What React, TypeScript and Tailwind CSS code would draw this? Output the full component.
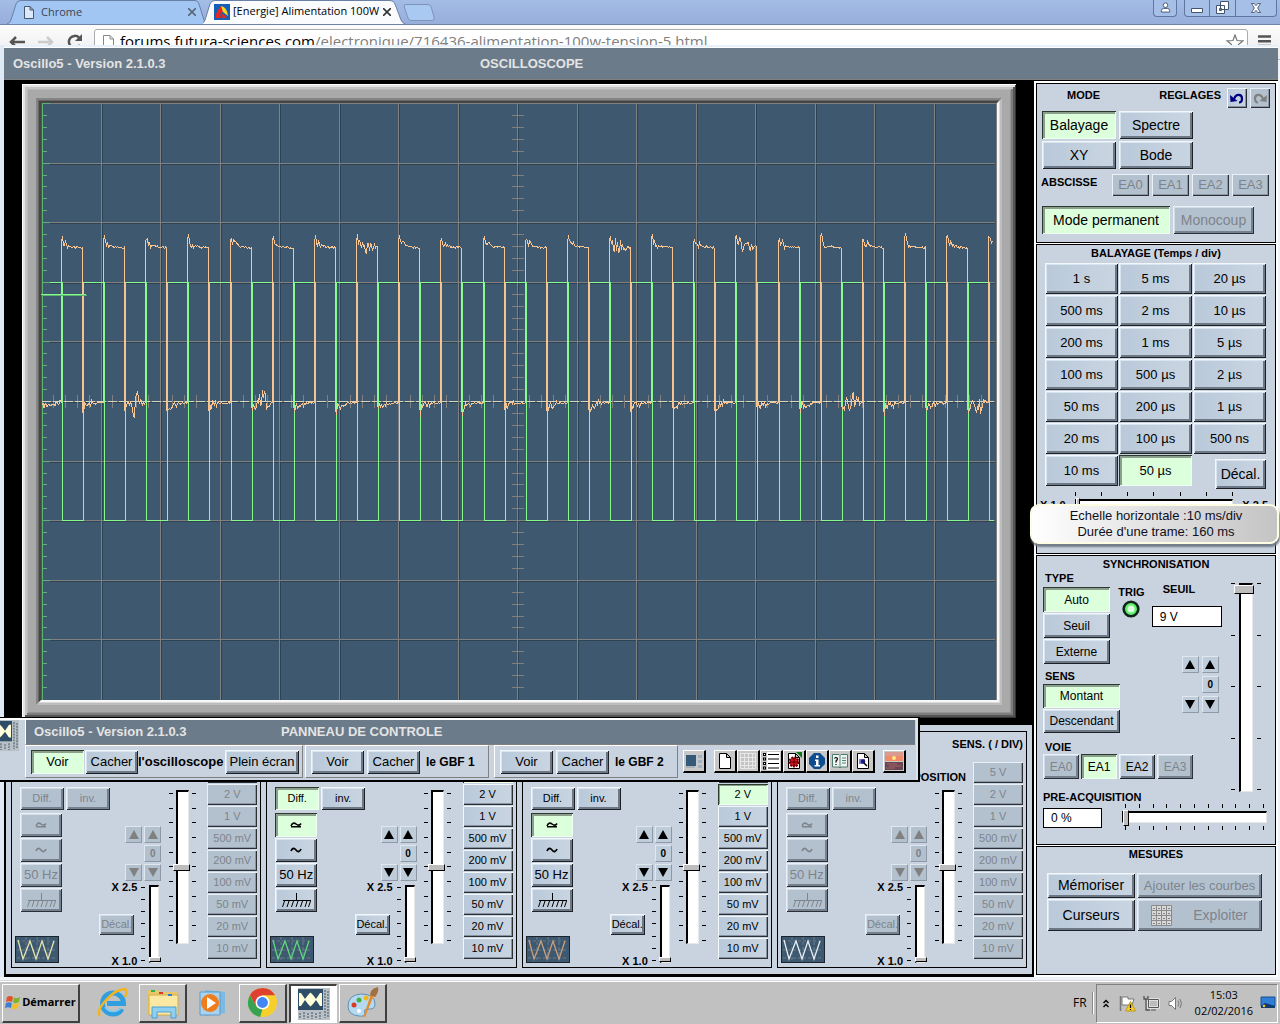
import React from "react";

type BtnProps = {
  children?: React.ReactNode;
  on?: boolean;
  disabled?: boolean;
  className?: string;
  label?: string;
};

function Btn({ children, on, disabled, className = "", label }: BtnProps) {
  const look = on
    ? "bg-[#dcffdc] text-black shadow-[inset_1px_1px_0_#2c3a2e,inset_-1px_-1px_0_#eefff0,inset_3px_3px_0_#8aa08c]"
    : disabled
      ? "bg-[#b3c1cf] text-[#7e848b] shadow-[inset_1px_1px_0_#e9f0f7,inset_-1px_-1px_0_#2b3036,inset_2px_2px_0_#d3dde8,inset_-3px_-3px_0_#75818e]"
      : "bg-linear-to-r from-[#b9c9da] to-[#cad5e1] text-black shadow-[inset_1px_1px_0_#f2f7fc,inset_-1px_-1px_0_#1d2126,inset_2px_2px_0_#dae4ee,inset_-3px_-3px_0_#6c7886]";
  return (
    <button
      type="button"
      disabled={disabled}
      aria-pressed={on}
      aria-label={label}
      className={`flex items-center justify-center whitespace-nowrap ${look} ${className}`}
    >
      {children}
    </button>
  );
}

function SmallBtn({ children, disabled, on, className = "", label }: BtnProps) {
  const look = on
    ? "bg-[#dcffdc] text-black shadow-[inset_1px_1px_0_#2c3a2e,inset_-1px_-1px_0_#eefff0,inset_2px_2px_0_#8aa08c]"
    : disabled
      ? "bg-[#b3c1cf] text-[#7e848b] shadow-[inset_1px_1px_0_#e9f0f7,inset_-1px_-1px_0_#2b3036,inset_-2px_-2px_0_#8c98a5]"
      : "bg-linear-to-r from-[#b9c9da] to-[#cad5e1] text-black shadow-[inset_1px_1px_0_#f2f7fc,inset_-1px_-1px_0_#2b3036,inset_-2px_-2px_0_#8793a0]";
  return (
    <button
      type="button"
      disabled={disabled}
      aria-pressed={on}
      aria-label={label}
      className={`flex items-center justify-center whitespace-nowrap ${look} ${className}`}
    >
      {children}
    </button>
  );
}

function ArrowPad({ disabled, wide }: { disabled?: boolean; wide?: boolean }) {
  const cell = `flex size-[17px] items-center justify-center border border-t-[#dfe8f0] border-l-[#dfe8f0] border-r-[#8d99a6] border-b-[#8d99a6] ${
    disabled ? "bg-[#b3c1cf] text-[#808080]" : "bg-[#bfcddb] text-black"
  }`;
  const up = (
    <svg viewBox="0 0 10 9" className="h-[9px] w-[10px]" fill="currentColor">
      <path d="M5 0 10 9H0z" />
    </svg>
  );
  const down = (
    <svg viewBox="0 0 10 9" className="h-[9px] w-[10px]" fill="currentColor">
      <path d="M0 0H10L5 9z" />
    </svg>
  );
  return (
    <div className={`grid grid-cols-[17px_17px] ${wide ? "gap-[3px]" : "gap-[2px]"}`}>
      <button type="button" disabled={disabled} aria-label="Monter vite" className={cell}>{up}</button>
      <button type="button" disabled={disabled} aria-label="Monter" className={cell}>{up}</button>
      <span />
      <button type="button" disabled={disabled} className={`${cell} text-[10px] leading-none font-bold`}>0</button>
      <button type="button" disabled={disabled} aria-label="Descendre vite" className={cell}>{down}</button>
      <button type="button" disabled={disabled} aria-label="Descendre" className={cell}>{down}</button>
    </div>
  );
}

function Ticks({ n, horizontal }: { n: number; horizontal?: boolean }) {
  return (
    <div className={`flex justify-between ${horizontal ? "" : "flex-col"}`}>
      {Array.from({ length: n }, (_, i) => (
        <span key={i} className={horizontal ? "h-1 w-px bg-black" : "h-px w-1 bg-black"} />
      ))}
    </div>
  );
}

const vertical =
  "m-0 block appearance-none border border-t-2 border-l-2 border-t-black border-l-black border-r-[#e8e8e8] border-b-[#e8e8e8] bg-white [writing-mode:vertical-lr] [direction:rtl] [&::-webkit-slider-thumb]:appearance-none [&::-webkit-slider-thumb]:border [&::-webkit-slider-thumb]:border-t-white [&::-webkit-slider-thumb]:border-l-white [&::-webkit-slider-thumb]:border-r-black [&::-webkit-slider-thumb]:border-b-black [&::-webkit-slider-thumb]:bg-[#bdbdbd]";
const horizontalRange =
  "m-0 block w-full appearance-none border border-t-2 border-t-black border-l-black border-r-[#e8e8e8] border-b-[#e8e8e8] bg-white [&::-webkit-slider-thumb]:appearance-none [&::-webkit-slider-thumb]:border [&::-webkit-slider-thumb]:border-t-white [&::-webkit-slider-thumb]:border-l-white [&::-webkit-slider-thumb]:border-r-black [&::-webkit-slider-thumb]:border-b-black [&::-webkit-slider-thumb]:bg-[#bdbdbd]";

/* ---------- Oscilloscope screen ---------- */

const X0 = 42;
const Y0 = 104;
const DIV = 59.6;
const PERIOD = 42.15;
const EDGE = 61;

function buildTraces() {
  let seed = 7;
  const rnd = () => {
    seed = (seed * 16807) % 2147483647;
    return seed / 2147483647 - 0.5;
  };
  const lowBurst = [2, 5, 19, 22];
  const highBurst = [7, 13, 16];
  let orange = "M42 405";
  for (let x = 43; x < EDGE; x += 1) orange += `L${x} ${(406 - (x - 43) / 5 + rnd() * 6).toFixed(1)}`;
  let green = "M50 282.5";
  for (let k = 0; k < 23; k += 1) {
    const a = Math.round(EDGE + k * PERIOD);
    const b = a + 21;
    const c = Math.round(EDGE + (k + 1) * PERIOD);
    if (a < 994) orange += `L${a + 0.5} 402`;
    for (let x = a; x <= b && x < 994; x += 1) {
      const t = x - a;
      const base = 248 - 8 * Math.exp(-t / 6);
      const noise = rnd() * (t < 7 ? 7 : 2);
      const burst = highBurst.includes(k) && t > 3 ? rnd() * 18 * Math.exp(-Math.abs(t - 9) / 8) : 0;
      const spike = t === 1 ? -5 : 0;
      const y = (base + noise + burst + spike).toFixed(1);
      orange += t === 0 ? `V${y}` : `L${x + 0.5} ${y}`;
    }
    for (let x = b; x < c && x < 994; x += 1) {
      const t = x - b;
      const base = 402.5 + 5 * Math.exp(-t / 7);
      const noise = rnd() * (t < 11 ? 8 : 2);
      const burst = lowBurst.includes(k + 1) && t > 4 ? rnd() * 34 * Math.exp(-Math.abs(t - 11) / 5) : 0;
      const y = (base + noise + burst + (t === 1 ? 6 : 0)).toFixed(1);
      orange += t === 0 ? `V${y}` : `L${x + 0.5} ${y}`;
    }
    if (a + 1 < 994) green += `H${a + 1.5}V520.5H${Math.min(b + 1.5, 994)}`;
    if (b + 1 < 994) green += `V282.5`;
  }
  return { orange, green };
}

const traces = buildTraces();

function ScopeScreen() {
  const vs = Array.from({ length: 15 }, (_, i) => Math.round(X0 + (i + 1) * 59.5));
  const hs = Array.from({ length: 9 }, (_, i) => Math.round(Y0 + (i + 1) * DIV) - 1);
  const xTicks = Array.from({ length: 79 }, (_, i) => Math.round(X0 + (i + 1) * 11.9));
  const yTicks = Array.from({ length: 49 }, (_, i) => Math.round(Y0 + (i + 1) * 11.92) - 1);
  return (
    <svg viewBox="41 103 956 597" className="block h-auto w-full bg-[#3d586f]" shapeRendering="crispEdges" fill="none" role="img" aria-label="Ecran">
      <g stroke="#2d4252">
        {vs.map((x) => <path key={x} d={`M${x + 0.5} 104V700`} />)}
        {hs.map((y) => <path key={y} d={`M50 ${y + 1.5}H995`} />)}
      </g>
      <g stroke="#808080">
        {vs.map((x) => <path key={x} d={`M${x - 0.5} 104V700`} />)}
        {hs.map((y) => <path key={y} d={`M50 ${y + 0.5}H995`} />)}
        {xTicks.map((x) => <path key={x} d={`M${x - 0.5} 395V408`} />)}
        {yTicks.map((y) => <path key={y} d={`M512 ${y + 0.5}H524`} />)}
        <path d="M50 103.5H996.5V700" />
      </g>
      <g stroke="#5cb270">
        <path d="M42.5 104V700M42 103.5H50" />
        {yTicks.map((y, i) => <path key={y} d={`M42 ${y + 0.5}H${(i + 1) % 5 === 0 ? 50 : 47}`} />)}
      </g>
      <path d="M42 401.5H994" stroke="#d5d5c0" strokeDasharray="9 2" />
      <path d={traces.green} stroke="#86fb8b" />
      <path d={traces.orange} stroke="#f8c592" />
      <path d="M41 294.5H86" stroke="#86fb8b" />
      <path d="M42 295.5H87" stroke="#5cb270" />
    </svg>
  );
}

/* ---------- Channels ---------- */

type ChannelProps = {
  id: number;
  disabled?: boolean;
  diff?: boolean;
  coupled?: boolean;
  sens?: number;
  color: string;
  headings?: boolean;
};

const levels = ["5 V", "2 V", "1 V", "500 mV", "200 mV", "100 mV", "50 mV", "20 mV", "10 mV"];

function Channel({ id, disabled, diff, coupled, sens, color, headings }: ChannelProps) {
  return (
    <section aria-label={`Voie ${id}`} className="flex min-w-[250px] flex-1 border border-black pr-[3px]">
      <div className="flex flex-1 flex-col pt-[55px] pl-[3px]">
        <div className="ml-[5px] flex gap-[2px] text-[11px]">
          <Btn on={diff} disabled={disabled} className="h-[23px] w-11">Diff.</Btn>
          <Btn disabled={disabled} className="h-[23px] w-11">inv.</Btn>
        </div>
        <div className="mt-[3px] flex justify-between">
          <div className="flex flex-col">
            <div className="ml-[5px] flex w-[42px] flex-col gap-px">
              <Btn on={coupled} disabled={disabled} className="h-6" label="Alternatif et continu">
                <svg viewBox="0 0 12 6" className="h-[6px] w-3" fill="none" stroke="currentColor" strokeWidth="1.6">
                  <path d="M1 4Q3 -.500 6 2T11 1.500M1 4.800H11" />
                </svg>
              </Btn>
              <Btn disabled={disabled} className="h-6" label="Alternatif">
                <svg viewBox="0 0 12 6" className="h-[6px] w-3" fill="none" stroke="currentColor" strokeWidth="1.8">
                  <path d="M1 4Q3 -.500 6 3T11 2" />
                </svg>
              </Btn>
              <Btn disabled={disabled} className="h-6 text-[13px]">50 Hz</Btn>
              <Btn disabled={disabled} className="h-6" label="Masse">
                <svg viewBox="0 0 30 14" className="h-[14px] w-[30px]" fill="none" stroke="currentColor">
                  <path d="M15.500 0V7M2 7.500H30M3.500 8l-2 6M8 8l-2 6M12.500 8l-2 6M17 8l-2 6M21.500 8l-2 6M26 8l-2 6M29.500 8l-2 6" />
                </svg>
              </Btn>
            </div>
            <svg viewBox="0 0 44 27" className="mt-[24px] h-[27px] w-11" fill="none">
              <path d="M0 0H44V27H0z" fill="#3d586f" stroke="#1a2530" strokeWidth="2" />
              <path d="M2 5H42M2 14H42M2 22H42M11 1V26M22 1V26M33 1V26" stroke="#6d7f8c" strokeDasharray="3 2" />
              <path d="M3 4 8 23 15 5 21 23 27 5 33 23 39 5" stroke={color} strokeWidth="1.3" />
            </svg>
          </div>
          <div className="mr-[3px] flex flex-col items-end pt-[13px]">
            <ArrowPad disabled={disabled} />
            <div className="mr-[2px] flex">
              <div className="mr-[4px] flex flex-col items-end justify-between text-[11px] leading-3 font-bold">
                <span>X 2.5</span>
                <Btn disabled={disabled} className="mr-[3px] h-[21px] w-[35px] text-[11px] font-normal">Décal.</Btn>
                <span>X 1.0</span>
              </div>
              <div className="flex py-[4px]">
                <div className="mr-1 flex pt-[2px] pb-[2px]"><Ticks n={7} /></div>
                <input
                  type="range"
                  aria-label={`Zoom voie ${id}`}
                  disabled={disabled}
                  defaultValue={0}
                  className={`${vertical} h-[78px] w-[10px] [&::-webkit-slider-thumb]:h-[5px] [&::-webkit-slider-thumb]:w-3`}
                />
              </div>
            </div>
          </div>
        </div>
      </div>
      <div className="flex w-9 flex-col items-end pt-[38px]">
        <h3 className="h-[20px] text-[11px] leading-[14px] font-bold whitespace-nowrap">{headings ? "POSITION" : ""}</h3>
        <div className="flex w-full justify-center gap-[3px]">
          <div className="flex py-[3px]"><Ticks n={11} /></div>
          <input
            type="range"
            aria-label={`Position voie ${id}`}
            disabled={disabled}
            defaultValue={50}
            className={`${vertical} h-[154px] w-[13px] [&::-webkit-slider-thumb]:-ml-[3px] [&::-webkit-slider-thumb]:h-[7px] [&::-webkit-slider-thumb]:w-[17px]`}
          />
          <div className="flex py-[3px]"><Ticks n={11} /></div>
        </div>
      </div>
      <div className="ml-[7px] flex w-[50px] flex-col items-end pt-[5px]">
        <h3 className="mb-[11px] h-[14px] text-[11px] leading-[14px] font-bold whitespace-nowrap">{headings ? "SENS. ( / DIV)" : ""}</h3>
        <div className="flex w-full flex-col gap-px text-[11px]">
          {levels.map((v, i) => (
            <SmallBtn key={v} on={sens === i} disabled={disabled} label={v} className="h-[21px]">
              {i > 0 || headings ? v : ""}
            </SmallBtn>
          ))}
        </div>
      </div>
    </section>
  );
}

/* ---------- Right-hand panels ---------- */

const box = "border border-black bg-[#c9d3e0]";
const cap = "text-[11px] leading-[14px] font-bold whitespace-nowrap";

function ModePanel() {
  return (
    <section className={`${box} h-[160px] px-[5px]`}>
      <div className="flex h-[27px] items-center">
        <h2 className={`${cap} flex-1 pb-[6px] pl-[25px]`}>MODE</h2>
        <span className={`${cap} mr-[6px] pb-[6px]`}>REGLAGES</span>
        <SmallBtn label="Annuler" className="mr-[3px] size-5">
          <svg viewBox="0 0 14 12" className="h-3 w-[14px]" fill="none" stroke="#000080" strokeWidth="2.2">
            <path d="M4 7C6 1 12 2 12 6.500 12 9 11 10.500 9 10.500" />
            <path d="M0 3 .500 10 7.500 9z" fill="#000080" stroke="none" />
          </svg>
        </SmallBtn>
        <SmallBtn label="Rétablir" disabled className="size-5">
          <svg viewBox="0 0 14 12" className="h-3 w-[14px]" fill="none" stroke="#808080" strokeWidth="2.2">
            <path d="M10 7C8 1 2 2 2 6.500 2 9 3 10.500 5 10.500" />
            <path d="M14 3 13.500 10 6.500 9z" fill="#808080" stroke="none" />
          </svg>
        </SmallBtn>
      </div>
      <div className="grid grid-cols-[74px_74px] gap-x-[3px] gap-y-[2px] text-[14px]">
        <Btn on className="h-7">Balayage</Btn>
        <Btn className="h-7">Spectre</Btn>
        <Btn className="h-7">XY</Btn>
        <Btn className="h-7">Bode</Btn>
      </div>
      <div className="mt-[5px] -ml-px flex gap-[3px]">
        <h3 className={`${cap} w-[68px] pt-px`}>ABSCISSE</h3>
        {["EA0", "EA1", "EA2", "EA3"].map((v) => (
          <SmallBtn key={v} disabled className="h-[22px] w-[37px] text-[13px]">{v}</SmallBtn>
        ))}
      </div>
      <div className="mt-[10px] flex gap-[3px] text-[14px]">
        <Btn on className="h-7 w-32">Mode permanent</Btn>
        <Btn disabled className="h-7 w-[81px]">Monocoup</Btn>
      </div>
    </section>
  );
}

const sweeps = [
  "1 s", "5 ms", "20 µs", "500 ms", "2 ms", "10 µs", "200 ms", "1 ms", "5 µs", "100 ms", "500 µs", "2 µs",
  "50 ms", "200 µs", "1 µs", "20 ms", "100 µs", "500 ns", "10 ms", "50 µs",
];

function SweepPanel() {
  return (
    <section className={`${box} relative h-[310px]`}>
      <h2 className={`${cap} pt-px text-center`}>BALAYAGE (Temps / div)</h2>
      <div className="mr-[9px] ml-2 mt-[3px] grid grid-cols-3 gap-px text-[13px]">
        {sweeps.map((v) => <Btn key={v} on={v === "50 µs"} className="h-[31px]">{v}</Btn>)}
        <Btn className="mt-1 ml-auto h-[30px] w-[51px] text-[14px]">Décal.</Btn>
      </div>
      <div className="mx-[3px] mt-[3px] flex items-end justify-between">
        <span className={cap}>X 1.0</span>
        <div className="mx-[9px] mb-[5px] flex-1">
          <Ticks n={7} horizontal />
          <input type="range" aria-label="Zoom horizontal" defaultValue={0} className={`${horizontalRange} mt-[3px] h-2 [&::-webkit-slider-thumb]:h-3 [&::-webkit-slider-thumb]:w-1`} />
        </div>
        <span className={`${cap} mr-1`}>X 2.5</span>
      </div>
      <div
        role="tooltip"
        className="absolute top-[259px] -right-1 -left-[7px] rounded-[9px] border-2 border-[#fdfde4] bg-linear-to-r from-white to-[#c4c4c4] py-[2px] pl-[3px] text-center text-[13px] leading-4 text-[#10101c] shadow-[1px_3px_2px_#737c88]"
      >
        <p>Echelle horizontale :10 ms/div</p>
        <p>Durée d'une trame: 160 ms</p>
      </div>
    </section>
  );
}

function SyncPanel() {
  return (
    <section className={`${box} flex h-[290px] flex-col px-[6px]`}>
      <h2 className={`${cap} pt-px text-center`}>SYNCHRONISATION</h2>
      <div className="flex justify-between">
        <div className="flex w-[77px] flex-col text-[12px]">
          <h3 className={`${cap} pl-[2px]`}>TYPE</h3>
          <div className="mt-[2px] flex w-[67px] flex-col gap-px">
            <Btn on className="h-[25px]">Auto</Btn>
            <Btn className="h-[25px]">Seuil</Btn>
            <Btn className="h-[25px]">Externe</Btn>
          </div>
          <h3 className={`${cap} mt-[5px] pl-[2px]`}>SENS</h3>
          <div className="mt-[1px] flex flex-col gap-px">
            <Btn on className="h-[24px]">Montant</Btn>
            <Btn className="h-[24px]">Descendant</Btn>
          </div>
          <h3 className={`${cap} mt-[7px] pl-[2px]`}>VOIE</h3>
          <div className="flex gap-[2px]">
            <Btn disabled className="h-[25px] w-9 shrink-0">EA0</Btn>
            <Btn on className="h-[25px] w-9 shrink-0">EA1</Btn>
            <Btn className="h-[25px] w-9 shrink-0">EA2</Btn>
            <Btn disabled className="h-[25px] w-9 shrink-0">EA3</Btn>
          </div>
        </div>
        <div className="-ml-[9px] flex flex-col items-center pt-[14px]">
          <h3 className={cap}>TRIG</h3>
          <svg viewBox="0 0 18 18" className="mt-px size-[18px]">
            <circle cx="9" cy="9" r="7.300" fill="#63f06c" stroke="#10251c" strokeWidth="2.6" />
            <circle cx="9" cy="9" r="3.500" fill="#dcffe0" />
          </svg>
        </div>
        <div className="mr-[2px] flex w-[70px] flex-col pt-[11px]">
          <label htmlFor="seuil" className={`${cap} pl-[11px]`}>SEUIL</label>
          <input id="seuil" defaultValue="9 V" className="mt-[10px] h-[21px] w-full border border-black bg-white pl-[7px] text-[12px]" />
          <div className="mt-[29px] self-end pr-[3px]"><ArrowPad wide /></div>
        </div>
        <div className="mr-[8px] flex gap-[4px] pt-[12px]">
          <div className="flex pb-[2px]"><Ticks n={5} /></div>
          <input
            type="range"
            aria-label="Niveau du seuil"
            defaultValue={100}
            className={`${vertical} h-[209px] w-[14px] [&::-webkit-slider-thumb]:-ml-[4px] [&::-webkit-slider-thumb]:h-[9px] [&::-webkit-slider-thumb]:w-5`}
          />
          <div className="flex pb-[2px]"><Ticks n={5} /></div>
        </div>
      </div>
      <div className="-mt-[8px] flex">
        <div className="w-[59px]">
          <label htmlFor="preacq" className={cap}>PRE-ACQUISITION</label>
          <input id="preacq" defaultValue="0 %" className="block h-[20px] w-full border border-black bg-white pl-[7px] text-[12px]" />
        </div>
        <div className="mr-[2px] ml-[20px] flex-1 pt-[20px]">
          <div className="px-[3px]"><Ticks n={11} horizontal /></div>
          <input type="range" aria-label="Pré-acquisition" defaultValue={0} className={`${horizontalRange} my-[3px] h-3 [&::-webkit-slider-thumb]:h-4 [&::-webkit-slider-thumb]:w-[6px]`} />
          <div className="px-[3px]"><Ticks n={11} horizontal /></div>
        </div>
      </div>
    </section>
  );
}

function MeasurePanel() {
  return (
    <section className={`${box} h-[129px] px-[10px]`}>
      <h2 className={`${cap} text-center`}>MESURES</h2>
      <div className="mt-[12px] grid grid-cols-[88px_125px] gap-x-[2px] gap-y-[1px] text-[14px]">
        <Btn className="h-[25px]">Mémoriser</Btn>
        <Btn disabled className="h-[25px] text-[13px]">Ajouter les courbes</Btn>
        <Btn className="h-8">Curseurs</Btn>
        <Btn disabled className="h-8 gap-[21px]">
          <svg viewBox="0 0 21 21" className="size-[21px]" stroke="#8a8a8a" fill="#d8d8d8">
            <path d="M.500 .500H20.500V20.500H.500zM5.500 0V21M10.500 0V21M15.500 0V21M0 5.500H21M0 10.500H21M0 15.500H21" />
            <path d="M2.500 3.500h16M2.500 8.500h16M2.500 13.500h16M2.500 18.500h16" stroke="#333" strokeDasharray="1 4" />
          </svg>
          Exploiter
        </Btn>
      </div>
    </section>
  );
}

/* ---------- Control window ---------- */

function ScopeLogo({ className }: { className: string }) {
  return (
    <svg viewBox="0 0 32 32" className={className} preserveAspectRatio="none">
      <path d="M0 0H32V32H0z" fill="#b9c1c8" />
      <path d="M0 1H25V22H0z" fill="#2f4d66" />
      <path d="M1 5H3L7 11 10 7 12.500 4.500 15 7 18 11 22 5H24V18H22L18 12 15 16 12.500 18.500 10 16 7 12 3 18H1z" fill="#ffffdc" />
      <path d="M27 2V30M30 3V30M2 25V31M6 24V31M10 25V31M14 24V31M18 25V31M22 24V31" stroke="#7c8790" strokeWidth="2" strokeDasharray="2 1" />
    </svg>
  );
}

const tool = "flex h-[23px] w-[23px] items-center justify-center border-t border-l border-t-white border-l-white border-r-2 border-b-2 border-r-black border-b-black bg-[#c8c8c8]";

function ToolIcons() {
  const sheet = <path d="M3.500 1.500H10.500L14.500 5.500V16.500H3.500zM10.500 1.500V5.500H14.500" fill="#fff" stroke="#000" />;
  return (
    <>
      <button type="button" aria-label="Oscilloscope" className={`${tool} ml-[5px]`}>
        <svg viewBox="0 0 18 18" className="size-[18px]">
          <path d="M1 3H11V14H1z" fill="#335a78" />
          <path d="M13 3H17V6H13zM13 8H17V11H13zM13 13H17V16H13z" fill="#9fb2c4" />
          <path d="M1 15H10" stroke="#8f9aa4" />
        </svg>
      </button>
      <div className="ml-[8px] flex">
        <button type="button" aria-label="Nouveau" className={tool}>
          <svg viewBox="0 0 18 18" className="size-[18px]">{sheet}</svg>
        </button>
        <button type="button" aria-label="Grille" className={tool}>
          <svg viewBox="0 0 18 18" className="size-[18px]" fill="#c4c4c4" stroke="#e8e8e8">
            <path d="M1.500 1.500H16.500V16.500H1.500zM5.500 1V17M9.500 1V17M13.500 1V17M1 5.500H17M1 9.500H17M1 13.500H17" />
          </svg>
        </button>
        <button type="button" aria-label="Liste" className={tool}>
          <svg viewBox="0 0 18 18" className="size-[18px]">
            <path d="M5 0H18V18H5z" fill="#fff" />
            <path d="M1 1H4V4H1zM1 5.500H4V8.500H1zM1 10H4V13H1zM1 14.500H4V17.500H1z" fill="#000" />
            <path d="M2 2H3V3H2zM2 6.500H3V7.500H2zM2 11H3V12H2zM2 15.500H3V16.500H2z" fill="#fff" />
            <path d="M6 2.500H17M6 7H17M6 11.500H17M6 16H17" stroke="#000" />
          </svg>
        </button>
        <button type="button" aria-label="Configuration" className={tool}>
          <svg viewBox="0 0 18 18" className="size-[18px]">
            {sheet}
            <path d="M11 0H17V6z" fill="#0a7a1a" />
            <circle cx="9" cy="10" r="4.500" fill="#e01020" stroke="#600" strokeDasharray="2 1" strokeWidth="2" />
            <path d="M5 10H13M9 6V14" stroke="#400" />
          </svg>
        </button>
        <button type="button" aria-label="Informations" className={tool}>
          <svg viewBox="0 0 18 18" className="size-[18px]">
            <path d="M6 1H12L17 6V12L12 17H6L1 12V6z" fill="#0f4d8f" />
            <path d="M8 3.500H10.500V6H8zM7 7.500H10.500V13H12V14.500H6.500V13H8V9H7z" fill="#fff" />
          </svg>
        </button>
        <button type="button" aria-label="Aide" className={tool}>
          <svg viewBox="0 0 18 18" className="size-[18px]" fill="none">
            <path d="M1.500 2.500H8L9 3.500 10 2.500H16.500V15H10L9 16 8 15H1.500z" fill="#eef4f0" stroke="#4d7a70" />
            <path d="M9 3.500V16M11 6H15M11 8.500H15M11 11H15" stroke="#5a8078" />
            <path d="M3.500 6.500Q5 4.500 6.500 6.500 6.500 8 5 9V10.500M5 12V13" stroke="#000" strokeWidth="1.2" />
          </svg>
        </button>
        <button type="button" aria-label="Aperçu" className={tool}>
          <svg viewBox="0 0 18 18" className="size-[18px]">
            {sheet}
            <path d="M5 7H11V12H5z" fill="#7b86c8" />
            <circle cx="9" cy="9.500" r="2.200" fill="#181880" />
            <path d="M10 11 13 14" stroke="#000" strokeWidth="1.500" />
          </svg>
        </button>
      </div>
      <button type="button" aria-label="Arrière-plan" className={`${tool} ml-[8px]`}>
        <svg viewBox="0 0 18 18" className="size-[18px]">
          <path d="M0 0H18V9H0z" fill="#f28a68" />
          <path d="M0 0H18V4H0z" fill="#d99a90" />
          <circle cx="9" cy="6" r="2" fill="#ffe87a" />
          <path d="M0 10H18V18H0z" fill="#6a4450" />
          <path d="M2 12H12M4 14H16M1 16H10" stroke="#a5666a" />
        </svg>
      </button>
    </>
  );
}

const group = "flex h-[33px] items-center border border-t-white border-l-white border-r-[#808080] border-b-[#808080]";

function ControlWindow() {
  return (
    <section aria-label="Panneau de controle" className="absolute top-[717px] right-[360px] left-0 border-t border-r-2 border-b-2 border-black bg-[#c9d3e0]">
      <div className="flex border-t-2 border-r-2 border-t-white border-r-[#dbe3ec]">
        <div className="w-[25px] overflow-hidden">
          <ScopeLogo className="-ml-[13px] h-[31px] w-8" />
        </div>
        <div className="flex-1">
          <header className="mr-px flex h-[25px] items-center border-b border-l border-b-[#808080] border-l-white bg-[#6c7b89] pl-[8px] text-[13px] font-bold text-[#e4e4e4]">
            <span className="w-[247px]">Oscillo5 - Version 2.1.0.3</span>
            <span>PANNEAU DE CONTROLE</span>
          </header>
          <div className="flex items-center pb-[2px] text-[13px]">
            <div className={`${group} w-[278px] pl-[5px]`}>
              <Btn on className="mr-[1px] h-[24px] w-[53px]">Voir</Btn>
              <Btn className="h-[24px] w-[53px]">Cacher</Btn>
              <span className="flex-1 font-bold">l'oscilloscope</span>
              <Btn className="mr-[3px] h-[24px] w-[74px]">Plein écran</Btn>
            </div>
            <div className={`${group} ml-[2px] w-[184px] gap-[3px] pl-[5px]`}>
              <Btn className="h-[24px] w-[53px]">Voir</Btn>
              <Btn className="h-[24px] w-[53px]">Cacher</Btn>
              <span className="pl-[3px] text-[12px] font-bold">le GBF 1</span>
            </div>
            <div className={`${group} ml-[5px] w-[184px] gap-[3px] pl-[5px]`}>
              <Btn className="h-[24px] w-[53px]">Voir</Btn>
              <Btn className="h-[24px] w-[53px]">Cacher</Btn>
              <span className="pl-[3px] text-[12px] font-bold">le GBF 2</span>
            </div>
            <ToolIcons />
          </div>
        </div>
      </div>
    </section>
  );
}

/* ---------- Browser behind ---------- */

function Browser() {
  return (
    <header className="absolute inset-x-0 top-0 bg-[#f3f4f6] font-['Open_Sans','Noto_Sans',sans-serif]">
      <div className="flex h-[25px] items-end border-b border-[#6f82a8] bg-linear-to-b from-[#a3bde6] to-[#98addb]">
        <div className="relative flex h-[24px] w-[196px] items-center pl-[24px] text-[12px] text-[#3b4452]">
          <svg viewBox="0 0 200 24" preserveAspectRatio="none" className="absolute inset-y-0 left-[7px] h-full w-[200px]">
            <path d="M0 24Q3 23 4 20L9 4Q10 .500 14 .500H188Q191 .500 192 4L197 20Q198 23 200 24" fill="#a2c6f3" stroke="#6a7fa5" />
          </svg>
          <svg viewBox="0 0 10 13" className="relative h-[13px] w-[10px]" fill="#dce9f8" stroke="#4a5668"><path d="M.500 .500H6L9.500 4V12.500H.500zM6 .500V4H9.500" /></svg>
          <span className="relative ml-[7px] flex-1 text-[11px]">Chrome</span>
          <button type="button" aria-label="Fermer Chrome" className="relative">
            <svg viewBox="0 0 8 8" className="size-2" stroke="#5b6676" strokeWidth="1.6"><path d="M0 0 8 8M8 0 0 8" /></svg>
          </button>
        </div>
        <div className="relative ml-[7px] flex h-[25px] w-[200px] items-center pr-[14px] pl-[11px] text-[11px] text-black">
          <svg viewBox="0 0 204 25" preserveAspectRatio="none" className="absolute inset-y-0 left-0 h-full w-[204px]">
            <path d="M-2 25.500Q1 24 2 21L7 5Q8 1.500 12 1.500H187Q191 1.500 192 5L198 21Q199 24 203 25.500" fill="#fafbfd" stroke="#6a7fa5" />
          </svg>
          <svg viewBox="0 0 16 16" className="relative size-4 shrink-0">
            <path d="M0 0H16V16H0z" fill="#1460b8" />
            <path d="M2 14Q1 9 7 2L9 8Q5 8 7 14z" fill="#e8261c" />
            <path d="M7 2Q13 3 14 12L9 8z" fill="#ffd21c" />
            <path d="M7 9 13 13 9 15z" fill="#e8261c" />
          </svg>
          <span className="relative ml-[3px] flex-1 whitespace-nowrap">[Energie] Alimentation 100W</span>
          <button type="button" aria-label="Fermer Energie" className="relative ml-1">
            <svg viewBox="0 0 8 8" className="size-2" stroke="#333" strokeWidth="1.6"><path d="M0 0 8 8M8 0 0 8" /></svg>
          </button>
        </div>
        <button type="button" aria-label="Nouvel onglet" className="mb-[3px]">
          <svg viewBox="0 0 32 17" className="h-[17px] w-8"><path d="M1 2Q1 .500 3 .500H25Q27 .500 28 2.500L31 13Q32 16.500 29 16.500H8Q6 16.500 5 14z" fill="#a9c9f3" stroke="#7d93ba" /></svg>
        </button>
        <div className="mr-[3px] ml-auto flex self-start">
          <button type="button" aria-label="Profil" className="mr-[7px] flex h-[17px] w-6 items-center justify-center rounded-b border border-t-0 border-[#60759f] bg-[#a6bfe6]">
            <svg viewBox="0 0 12 12" className="-mt-px size-[11px]" fill="#fff" stroke="#44546f"><circle cx="6" cy="3.500" r="2.500" /><path d="M1.500 11V9Q2 7 4 7H8Q10 7 10.500 9V11z" /></svg>
          </button>
          <button type="button" aria-label="Réduire" className="flex h-[17px] w-[26px] items-center justify-center rounded-bl border border-t-0 border-[#60759f] bg-[#a6bfe6]">
            <svg viewBox="0 0 12 5" className="mt-1 h-[5px] w-3" fill="#fff" stroke="#44546f"><path d="M.500 .500H11.500V4.500H.500z" /></svg>
          </button>
          <button type="button" aria-label="Restaurer" className="flex h-[17px] w-[25px] items-center justify-center border-b border-[#60759f] bg-[#a6bfe6]">
            <svg viewBox="0 0 13 13" className="-mt-px size-[13px]" fill="#fff" stroke="#44546f"><path d="M4.500 .500H12.500V8.500H4.500zM.500 4.500H8.500V12.500H.500zM3.500 7.500H5.500V9.500H3.500z" /></svg>
          </button>
          <button type="button" aria-label="Fermer" className="flex h-[17px] w-[42px] items-center justify-center rounded-br border border-t-0 border-[#60759f] bg-[#a6bfe6]">
            <svg viewBox="0 0 12 11" className="-mt-px h-[10px] w-3"><path d="M1 .500H4L6 3 8 .500H11L7.800 5.500 11 10.500H8L6 8 4 10.500H1L4.200 5.500z" fill="#fff" stroke="#44546f" /></svg>
          </button>
        </div>
      </div>
      <div className="flex h-[35px] items-start border-b border-[#b5b9c0] bg-linear-to-b from-[#fcfcfd] to-[#ececee] pt-1">
        <div className="flex w-[94px] gap-[13px] pt-[7px] pl-[9px]">
          <svg viewBox="0 0 16 12" className="h-3 w-4" fill="none" stroke="#555" strokeWidth="2.5"><path d="M2 6H16M7 1 2 6 7 11" /></svg>
          <svg viewBox="0 0 16 12" className="h-3 w-4" fill="none" stroke="#ccc" strokeWidth="2.5"><path d="M0 6H14M9 1 14 6 9 11" /></svg>
          <svg viewBox="0 0 16 16" className="-mt-[2px] size-4" fill="none" stroke="#555" strokeWidth="2.5"><path d="M13 11A6 6 0 1 1 12 3.500" /><path d="M15 0V7H8z" fill="#555" stroke="none" /></svg>
        </div>
        <div className="flex h-[26px] flex-1 items-start rounded-[3px] border border-[#a9abae] bg-white pl-[8px]">
          <svg viewBox="0 0 11 14" className="mt-[5px] h-[14px] w-[11px]" fill="none" stroke="#888"><path d="M.500 .500H7L10.500 4V13.500H.500zM7 .500V4H10.500" /></svg>
          <span className="ml-[6px] flex-1 text-[15px] leading-[22px] text-[#808080]">
            <span className="text-black">forums.futura-sciences.com</span>/electronique/716436-alimentation-100w-tension-5.html
          </span>
          <svg viewBox="0 0 18 17" className="mt-1 mr-[3px] h-[17px] w-[18px]" fill="none" stroke="#777" strokeWidth="1.2"><path d="M9 1 11 6.500 17 6.800 12.500 10.500 14 16 9 13 4 16 5.500 10.500 1 6.800 7 6.500z" /></svg>
        </div>
        <button type="button" aria-label="Menu" className="mr-[9px] ml-[10px] pt-[6px]">
          <svg viewBox="0 0 13 12" className="h-3 w-[13px]" stroke="#555" strokeWidth="2.6"><path d="M0 1.500H13M0 6.200H13M0 11H13" /></svg>
        </button>
      </div>
    </header>
  );
}

/* ---------- Taskbar ---------- */

const task = "flex h-[39px] items-center justify-center border-t border-l border-r-2 border-b-2 border-t-white border-l-white border-r-[#404040] border-b-[#404040]";

function Taskbar() {
  return (
    <footer className="flex h-[43px] items-center border-t border-white bg-[#c1c1c1] px-[2px] font-['Open_Sans','Noto_Sans',sans-serif] shadow-[0_-1px_0_#d9d9d9]">
      <button type="button" className={`${task} w-[78px] text-[11px] font-bold`}>
        <svg viewBox="0 0 16 15" className="mr-px h-[15px] w-4">
          <path d="M2 2Q5 0 8 2L7 7Q4 5.500 1 7z" fill="#e2512a" />
          <path d="M9 2.500Q12 4 15 2L14 7Q11 9 8 7.500z" fill="#7db52a" />
          <path d="M1 8Q4 6.500 6.800 8L6 13Q3 11.500 0 13z" fill="#3a7fd0" />
          <path d="M7.800 8.500Q11 10 14 8L13 13Q10 15 7 13.500z" fill="#f4c020" />
        </svg>
        Démarrer
      </button>
      <button type="button" aria-label="Internet Explorer" className="ml-[17px]">
        <svg viewBox="0 0 32 32" className="size-8" fill="none">
          <path d="M25 22A10.500 10.500 0 1 1 26.500 16.500H10" stroke="#2f9fe0" strokeWidth="5" />
          <path d="M24 21A10 10 0 0 1 8 20" stroke="#7ccdf5" strokeWidth="1.500" />
          <path d="M3 29Q-1 24 9 13T28 2Q31 4 28 10" stroke="#f2b51c" strokeWidth="2.4" />
        </svg>
      </button>
      <button type="button" aria-label="Explorateur" className={`${task} ml-[10px] w-[48px]`}>
        <svg viewBox="0 0 34 32" className="h-8 w-[34px]">
          <path d="M2 3H12L14 5H31V27H2z" fill="#e9c766" />
          <path d="M3 8H32V28H3z" fill="#fbe9a3" stroke="#d4ac48" />
          <path d="M5 3H9V5H5z" fill="#2bb24a" /><path d="M13 5H17V7H13z" fill="#d83b2b" /><path d="M22 7H26V9H22z" fill="#2d7de0" />
          <path d="M6 20H30V31H25V25H11V31H6z" fill="#8fd0f2" stroke="#4a9fd0" />
        </svg>
      </button>
      <button type="button" aria-label="Lecteur multimédia" className="ml-[11px]">
        <svg viewBox="0 0 30 30" className="size-[30px]">
          <path d="M7 2 27 4V25L7 28z" fill="#7fb8e0" />
          <path d="M2 4H22V27H2z" fill="#a8d2ef" stroke="#5a9cc8" />
          <circle cx="12" cy="15" r="9" fill="#f07c1c" />
          <path d="M9 9 18 15 9 21z" fill="#fff" />
        </svg>
      </button>
      <button type="button" aria-label="Chrome" className={`${task} ml-[11px] w-[48px]`}>
        <svg viewBox="0 0 32 32" className="size-[31px]">
          <circle cx="16" cy="16" r="15" fill="#f7cf2d" />
          <path d="M3 8.500A15 15 0 0 1 29 8.500H16L9.500 20z" fill="#df4030" />
          <path d="M3 8.500 9.500 20 16 23 13.500 31A15 15 0 0 1 3 8.500" fill="#35a352" />
          <circle cx="16" cy="16" r="7.200" fill="#fff" /><circle cx="16" cy="16" r="5.600" fill="#4285f4" />
        </svg>
      </button>
      <button type="button" aria-label="Oscillo5" className="ml-[2px] flex h-[39px] w-[48px] items-center justify-center border-t-2 border-l-2 border-r border-b border-t-[#404040] border-l-[#404040] border-r-white border-b-white bg-white">
        <ScopeLogo className="size-8" />
      </button>
      <button type="button" aria-label="Paint" className={`${task} ml-[2px] w-[48px]`}>
        <svg viewBox="0 0 34 32" className="h-8 w-[34px]">
          <path d="M2 19Q2 8 15 7 29 7 29 17 29 23 22 22 17 22 19 26 19 30 13 29 2 28 2 19z" fill="#b5daf0" stroke="#5e90b5" />
          <circle cx="8" cy="18" r="2.500" fill="#d83a2a" /><circle cx="13" cy="13" r="2.500" fill="#47b04a" /><circle cx="20" cy="11" r="2.500" fill="#f0b820" /><circle cx="13" cy="24" r="2" fill="#fff" />
          <path d="M28 8 19 30Q17 31 18 28L25 7z" fill="#e8892c" />
          <path d="M24 8Q24 2 32 0 33 5 29 10z" fill="#a07040" />
        </svg>
      </button>
      <span className="ml-auto text-[12px]">FR</span>
      <span className="mr-[2px] ml-[5px] h-[22px] w-[2px] border-l border-[#8a8a8a] bg-white" />
      <div className="flex h-[39px] items-center border border-t-[#808080] border-l-[#808080] border-r-white border-b-white pr-px pl-[6px]">
        <svg viewBox="0 0 6 9" className="h-[9px] w-[6px]" fill="none" stroke="#000" strokeWidth="1.4"><path d="M.500 4 3 1.500 5.500 4M.500 8 3 5.500 5.500 8" /></svg>
        <svg viewBox="0 0 17 17" className="ml-[10px] size-[17px]">
          <path d="M1.500 1V16" stroke="#777" strokeWidth="1.500" /><path d="M3 2H9V4H15L13 10H3z" fill="#fff" stroke="#777" />
          <path d="M11.500 6.500 16.500 16H6.500z" fill="#f8d02a" stroke="#c09a10" /><path d="M11.500 9.500V13M11.500 14V15" stroke="#000" strokeWidth="1.3" />
        </svg>
        <svg viewBox="0 0 17 16" className="ml-[7px] h-4 w-[17px]" fill="none" stroke="#555">
          <path d="M5.500 4.500H15.500V12.500H5.500z" fill="#bbb" stroke="#fff" strokeWidth="2" /><path d="M5.500 4.500H15.500V12.500H5.500zM8 15H13" />
          <path d="M1 1V4H5V1M3 4V15H7" strokeWidth="1.3" />
        </svg>
        <svg viewBox="0 0 15 15" className="ml-[8px] size-[15px]" fill="#fff" stroke="#777"><path d="M1 5.500H3.500L7.500 1.500V13.500L3.500 9.500H1z" /><path d="M10 4.500Q12 7.500 10 10.500M12 3Q15 7.500 12 12" fill="none" /></svg>
        <div className="ml-[12px] text-center text-[11px] leading-4">
          <p>15:03</p>
          <p>02/02/2016</p>
        </div>
        <svg viewBox="0 0 16 14" className="ml-[7px] h-[14px] w-4"><path d="M1 1H15V10H1z" fill="#2f7fd6" stroke="#1a4f90" /><path d="M1 10 5 7 15 10V12H1z" fill="#123c70" /><circle cx="4" cy="10" r="1.300" fill="#f0c830" /></svg>
      </div>
    </footer>
  );
}

export default function App() {
  return (
    <div className="relative flex min-h-screen flex-col overflow-hidden bg-[#eef3fa] font-['Liberation_Sans',Arial,sans-serif] text-black">
      <Browser />
      <main className="relative mt-[45px] mr-[2px] ml-1 border-t-2 border-[#e6f1fc] shadow-[-4px_0_0_#dfeaf6]">
        <header className="flex h-[33px] items-center border-t border-b border-t-white border-b-[#808080] bg-[#6c7b89] pl-[9px] text-[13px] font-bold text-[#e4e4e4]">
          <span className="w-[467px]">Oscillo5 - Version 2.1.0.3</span>
          <h1>OSCILLOSCOPE</h1>
        </header>
        <div className="flex bg-black">
          <div className="min-w-0 flex-1">
            <div className="mt-[4px] mr-[18px] ml-[18px] bg-[#a9a9a9] px-[14px] pt-[14px] pb-[13px] shadow-[inset_1px_1px_0_#fff,inset_-1px_-1px_0_#333,inset_3px_3px_0_#e2e2e2,inset_-3px_-3px_0_#555,inset_5px_5px_0_#c4c4c4,inset_-5px_-5px_0_#7c7c7c,inset_6px_6px_0_#b6b6b6,inset_-6px_-6px_0_#949494]">
              <div className="border-2 border-t-[#858585] border-r-[#bdbdbd] border-b-[#bdbdbd] border-l-[#858585]">
                <div className="border border-t-[#666] border-r-[#dadada] border-b-[#dadada] border-l-[#666]">
                  <div className="border-2 border-t-[#454545] border-r-[#f8f8f8] border-b-[#f8f8f8] border-l-[#454545]">
                    <ScopeScreen />
                  </div>
                </div>
              </div>
            </div>
            <div className="mt-[7px] mr-[2px] mb-[2px] ml-[2px] flex gap-[5px] bg-[#c9d3e0] px-[5px] pt-[6px] pb-[6px]">
              <Channel id={0} disabled color="#e4e6b0" />
              <Channel id={1} diff coupled sens={0} color="#5fd67c" />
              <Channel id={2} coupled sens={1} color="#c9a07c" />
              <Channel id={3} disabled headings color="#e6eef4" />
            </div>
          </div>
          <aside className="mt-px flex w-[244px] shrink-0 flex-col gap-px border-t border-l-2 border-white bg-white pt-px pr-[2px] pb-[2px]">
            <ModePanel />
            <SweepPanel />
            <SyncPanel />
            <MeasurePanel />
          </aside>
        </div>
      </main>
      <ControlWindow />
      <div className="mt-auto">
        <Taskbar />
      </div>
    </div>
  );
}
